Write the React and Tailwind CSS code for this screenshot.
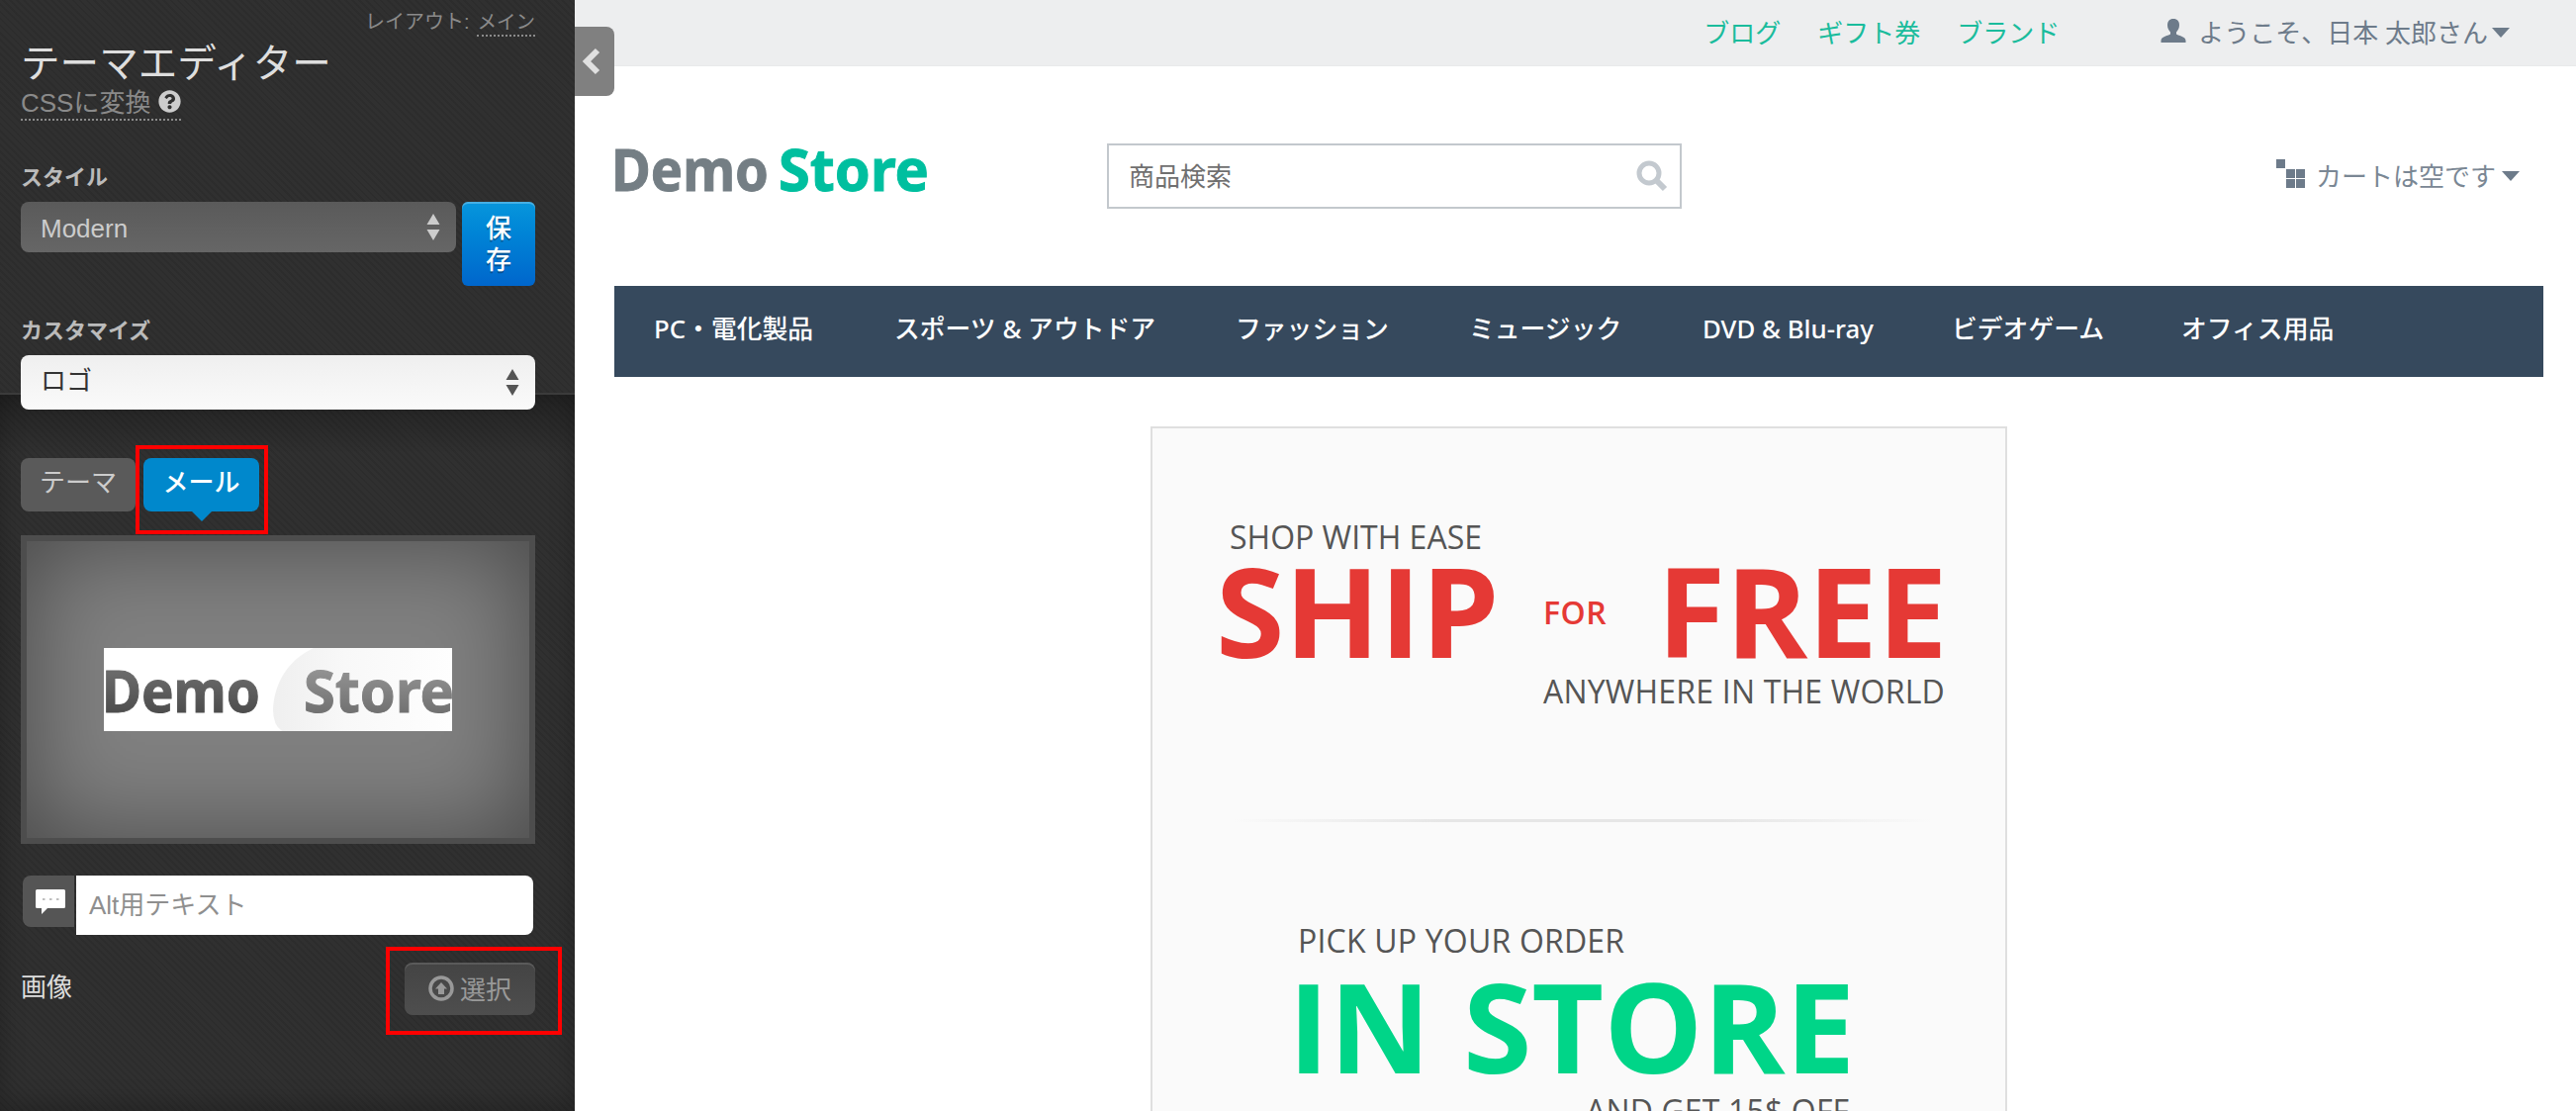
import { FaQuestionCircle } from 'react-icons/fa';

const categories = [
    { name: 'PC・電化製品', width: 'w-[243px]' },
    { name: 'スポーツ & アウトドア', width: 'w-[345px]' },
    { name: 'ファッション', width: 'w-[236px]' },
    { name: 'ミュージック', width: 'w-[236px]' },
    { name: 'DVD & Blu-ray', width: 'w-[252px]' },
    { name: 'ビデオゲーム', width: 'w-[232px]' },
    { name: 'オフィス用品', width: 'w-[160px]' }
];

const SelectArrows = ({ className }) => (
    <svg className={className} width="14" height="27" viewBox="0 0 14 27" fill="currentColor">
        <path d="M7 0l6.5 11H.5zM7 27L.5 16h13z" />
    </svg>
);

const Caret = () => (
    <svg width="18" height="10" viewBox="0 0 18 10" fill="currentColor">
        <path d="M0 0h18L9 10z" />
    </svg>
);

const Sidebar = () => (
    <aside className="relative w-[581px] h-full shrink-0 bg-[#303030] text-[#ccc] font-['Liberation_Sans','Noto_Sans_CJK_JP',sans-serif] bg-[repeating-linear-gradient(45deg,rgba(0,0,0,0.08)_0px,rgba(0,0,0,0.08)_2px,transparent_2px,transparent_5px)]">
        <div className="h-[399px] pl-[21px] pr-10 border-b-2 border-[#3b3b3b]">
            <div className="flex justify-end h-9 pt-2 text-[19.5px] leading-7 text-[#8a8a8a]">
                <span className="mr-2 text-[20px]">レイアウト:</span>
                <span className="h-[29px] border-b-2 border-dotted border-[#8a8a8a]">メイン</span>
            </div>
            <h1 className="h-[52px] pt-0.5 text-[39.6px] leading-[52px] text-[#dedede]">テーマエディター</h1>
            {/* Convert to CSS */}
            <div className="flex">
                <div className="flex items-start h-[34px] border-b-2 border-dotted border-[#8a8a8a] text-[26px] leading-8 text-[#8a8a8a]">
                    CSSに変換
                    <FaQuestionCircle className="ml-2 mt-[3px] size-[23px] text-[#ccc]" />
                </div>
            </div>

            <div className="mt-10 h-[42px] text-[22px] leading-9 font-bold text-[#bbb]">スタイル</div>
            <div className="flex gap-1.5">
                <div className="flex items-center justify-between w-[440px] h-[51px] pl-5 pr-4 rounded-lg bg-linear-to-b from-[#5a5a5a] to-[#666] text-[26px]">
                    <span className="pt-1">Modern</span>
                    <SelectArrows />
                </div>
                <button className="w-[74px] h-[85px] px-6 rounded-md bg-linear-to-b from-[#0896dc] to-[#0066cc] text-white text-[26px] leading-8 font-medium shadow-[inset_0_2px_0_rgba(255,255,255,0.25)] [text-shadow:0_2px_0_rgba(0,0,0,0.3)]">
                    保存
                </button>
            </div>

            <div className="mt-7 h-[42px] text-[22px] leading-9 font-bold text-[#bbb]">カスタマイズ</div>
            <div className="relative z-10 flex items-center justify-between w-[520px] h-[55px] pl-5 pr-4 rounded-lg bg-linear-to-b from-[#efefef] to-[#fafafa] text-[26px] text-[#333]">
                <span className="pb-0.5">ロゴ</span>
                <SelectArrows className="text-[#555]" />
            </div>
        </div>

        <div className="h-[724px] pl-[21px] pr-10 pt-16 bg-[linear-gradient(rgba(0,0,0,0.28),transparent_60px)] shadow-[inset_0_-6px_24px_rgba(0,0,0,0.25)]">
            <div className="flex gap-2 h-[78px]">
                <div className="w-[116px] h-[54px] rounded-lg bg-[#5a5a5a] text-center text-[26px] leading-[50px]">テーマ</div>
                <div className="relative w-[117px] h-[54px] rounded-lg bg-[#0088cc] text-center text-[26px] leading-[50px] font-medium text-white">
                    メール
                    <div className="absolute left-[49px] top-[54px] border-x-10 border-t-10 border-x-transparent border-t-[#0088cc]" />
                    <div className="absolute -left-2 -top-[13px] w-[134px] h-[90px] border-4 border-[#f00]" />
                </div>
            </div>

            {/* Logo preview */}
            <div className="flex items-center justify-center w-[520px] h-[312px] border-6 border-[#4d4d4d] bg-[#808080] shadow-[inset_0_0_100px_rgba(0,0,0,0.45)]">
                <svg width="352" height="84" viewBox="0 0 352 84" className="bg-white">
                    <defs>
                        <linearGradient id="demo" x1="0" y1="0" x2="0" y2="1">
                            <stop offset="0.3" stopColor="#6a6a6a" />
                            <stop offset="0.9" stopColor="#464646" />
                        </linearGradient>
                        <linearGradient id="store" x1="0" y1="0" x2="0" y2="1">
                            <stop offset="0.2" stopColor="#969696" />
                            <stop offset="0.9" stopColor="#6a6a6a" />
                        </linearGradient>
                        <linearGradient id="bubble" x1="0" y1="0" x2="1" y2="0">
                            <stop offset="0" stopColor="#efefef" />
                            <stop offset="0.4" stopColor="#f8f8f8" />
                            <stop offset="1" stopColor="#fefefe" />
                        </linearGradient>
                    </defs>
                    <path d="M212 0C186 12 172 36 171 62Q171 78 180 84H352V0z" fill="url(#bubble)" />
                    <text x="-2" y="65" fontFamily="Noto Sans" fontWeight="bold" fontSize="60" textLength="160" lengthAdjust="spacingAndGlyphs" fill="url(#demo)" stroke="url(#demo)" strokeWidth="1">Demo</text>
                    <text x="202" y="65" fontFamily="Noto Sans" fontWeight="bold" fontSize="60" textLength="152" lengthAdjust="spacingAndGlyphs" fill="url(#store)" stroke="url(#store)" strokeWidth="1">Store</text>
                </svg>
            </div>

            {/* Alt text */}
            <div className="flex gap-0.5 mt-8 pl-0.5">
                <div className="flex justify-center w-[52px] h-[52px] pt-[14px] pl-1 rounded-l-lg bg-[#555] text-white">
                    <svg width="30" height="25" viewBox="0 0 30 25" fill="currentColor">
                        <path d="M1.5 0h27A1.5 1.5 0 0 1 30 1.5v16a1.5 1.5 0 0 1-1.5 1.5H12l-6 6v-6H1.5A1.5 1.5 0 0 1 0 17.5v-16A1.5 1.5 0 0 1 1.5 0z" />
                        <path d="M7 10h2.5M14 10h2.5M21 10h2.5" stroke="#aaa" strokeWidth="1.5" />
                    </svg>
                </div>
                <div className="w-[462px] h-[60px] pl-[13px] rounded-r-lg bg-white text-[26px] leading-[60px] text-[#8f8f8f]">Alt用テキスト</div>
            </div>

            <div className="flex justify-between mt-7">
                <span className="text-[26px] leading-[50px] text-[#ddd]">画像</span>
                <div className="relative flex items-center justify-center gap-1.5 w-[132px] h-[53px] pt-0.5 rounded-lg bg-linear-to-b from-[#444] to-[#4e4e4e] shadow-[inset_0_2px_0_rgba(255,255,255,0.12)] text-[26px] leading-[50px] text-[#999]">
                    <svg className="-mt-1" width="26" height="26" viewBox="0 0 26 26" fill="currentColor">
                        <circle cx="13" cy="13" r="11" fill="none" stroke="currentColor" strokeWidth="3.5" />
                        <path d="M13 7l6 6.5h-3V19h-6v-5.5H7z" />
                    </svg>
                    選択
                    <div className="absolute -left-[19px] -top-4 w-[178px] h-[89px] border-4 border-[#f00]" />
                </div>
            </div>
        </div>

        {/* Collapse handle */}
        <div className="absolute left-full top-[27px] z-20 flex items-center w-10 h-[70px] pl-1.5 rounded-r-lg bg-[#808080]">
            <svg width="20" height="28" viewBox="0 0 20 28" fill="none" stroke="#e0e0e0" strokeWidth="6">
                <path d="M17 3L6 14l11 11" />
            </svg>
        </div>
    </aside>
);

const Storefront = () => (
    <main className="flex-1 bg-white font-['Noto_Sans','Noto_Sans_CJK_JP',sans-serif] text-[26px] text-[#6d7b8a]">
        <div className="flex items-center justify-end h-[67px] pr-[67px] border-b border-[#e8e9ea] bg-[#edeeef]">
            <div className="flex gap-[37px] mr-[102px] text-[#1abc9c]">
                <a>ブログ</a>
                <a>ギフト券</a>
                <a>ブランド</a>
            </div>
            <svg className="mr-3 -mt-1" width="26" height="24" viewBox="0 0 25 24" fill="currentColor">
                <path d="M12.5 0c4 0 6 2.5 6 6.5 0 3.5-1.5 5-3 7v2c3 1.8 9.5 2.5 9.5 6.5v2H0v-2c0-4 6.5-4.7 9.5-6.5v-2c-1.5-2-3-3.5-3-7 0-4 2-6.5 6-6.5z" />
            </svg>
            <span className="mr-1">ようこそ、日本 太郎さん</span>
            <Caret />
        </div>

        <div className="flex items-center h-[222px] pl-10 pr-[57px]">
            <svg className="-mt-[10px] overflow-visible" width="320" height="60" viewBox="0 0 320 60">
                <text x="-3" y="50" fontFamily="Noto Sans" fontWeight="bold" fontSize="60" textLength="159" lengthAdjust="spacingAndGlyphs" fill="#747e84" stroke="#747e84" strokeWidth="1">Demo</text>
                <text x="166" y="50" fontFamily="Noto Sans" fontWeight="bold" fontSize="60" textLength="152" lengthAdjust="spacingAndGlyphs" fill="#00bf9f" stroke="#00bf9f" strokeWidth="1">Store</text>
            </svg>
            <div className="flex items-center justify-between w-[581px] h-[66px] ml-[178px] pl-5 pr-3 border-2 border-[#c3c8cd] text-[#707070]">
                商品検索
                <svg width="32" height="32" viewBox="0 0 32 32" fill="none" stroke="#c3c9cf">
                    <circle cx="13" cy="13" r="10" strokeWidth="5" />
                    <path d="M20 20l9 9" strokeWidth="6" />
                </svg>
            </div>
            <div className="flex items-center ml-auto">
                <svg className="mr-2.5 -mt-1" width="30" height="30" viewBox="0 0 30 30" fill="currentColor">
                    <path d="M0 0h9v9H0zM10 10h9v9h-9zM20 10h9v9h-9zM10 20h9v9h-9zM20 20h9v9h-9z" />
                </svg>
                <span className="mr-1.5 text-[#7a8794]">カートは空です</span>
                <Caret />
            </div>
        </div>

        <nav className="flex w-[1950px] h-[92px] ml-10 pl-10 bg-[#36495d] text-white text-[25.8px] font-medium leading-[86px]">
            {categories.map((category) => (
                <a key={category.name} className={`${category.width} shrink-0 whitespace-nowrap`}>
                    {category.name}
                </a>
            ))}
        </nav>

        {/* Promo banner */}
        <div className="w-[866px] h-[720px] ml-[582px] mt-[50px] border-2 border-[#dfdfdf] bg-[#fafafa] font-['Open_Sans',sans-serif] text-[32px] text-[#555] whitespace-nowrap">
            <div className="h-10 mt-[90px] pl-[78px] leading-10">SHOP WITH EASE</div>
            <div className="flex items-center h-[107px] pl-16 text-[#e53935] font-bold leading-[107px]">
                <span className="w-[331px] text-[126px]">SHIP</span>
                <span className="w-[115px] pt-[3px] font-semibold tracking-[0.5px]">FOR</span>
                <span className="text-[126px]">FREE</span>
            </div>
            <div className="h-10 mt-[9px] pl-[395px] leading-10 tracking-[0.2px]">ANYWHERE IN THE WORLD</div>
            <div className="w-[706px] h-[3px] ml-[82px] mt-[109px] bg-[linear-gradient(90deg,transparent,#e6e6e6_30%,#e6e6e6_70%,transparent)]" />
            <div className="h-10 mt-[100px] pl-[147px] leading-10 tracking-[0.2px]">PICK UP YOUR ORDER</div>
            <div className="h-[132px] pl-[137px] text-[126px] leading-[130px] font-bold text-[#00d588]">IN STORE</div>
            <div className="h-10 pl-[438px] leading-10 tracking-[0.15px]">AND GET 15$ OFF</div>
        </div>
    </main>
);

const App = () => (
    <div className="flex w-[2604px] h-[1123px] overflow-hidden">
        <Sidebar />
        <Storefront />
    </div>
);

export default App;
